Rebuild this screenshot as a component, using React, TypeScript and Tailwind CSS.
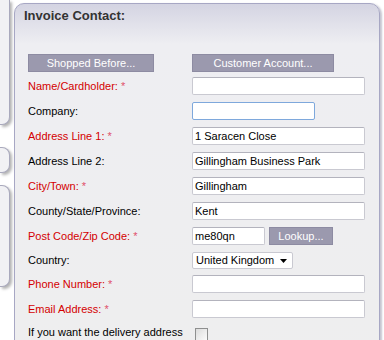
import React from 'react';

const Req = () => <span className="text-[#e0506a]"> *</span>;

const Label = ({ text, required }: { text: string; required?: boolean }) => (
  <div className={`w-[164px] shrink-0 text-[11px] leading-[13px] ${required ? 'text-[#d40000]' : 'text-black'}`}>
    {text}
    {required && <Req />}
  </div>
);

const TextBox = ({ value = '', width = 'w-[173px]', focused = false }: { value?: string; width?: string; focused?: boolean }) => (
  <div
    className={`${width} h-[18px] bg-white rounded-[2px] border flex items-center pl-[2px] text-[11px] text-black ${
      focused ? 'border-[#7ea8dc]' : 'border-[#c9c9d1] border-t-[#b3b3bd]'
    }`}
  >
    {value}
  </div>
);

const GreyButton = ({ label, width }: { label: string; width: string }) => (
  <button className={`${width} h-[18px] bg-[#9b99ae] border border-[#8d8ba2] text-white text-[11px] leading-none flex items-center justify-center`}>
    {label}
  </button>
);

const fields = [
  { label: 'Name/Cardholder:', required: true },
  { label: 'Company:', focused: true, width: 'w-[123px]' },
  { label: 'Address Line 1:', required: true, value: '1 Saracen Close' },
  { label: 'Address Line 2:', value: 'Gillingham Business Park' },
  { label: 'City/Town:', required: true, value: 'Gillingham' },
  { label: 'County/State/Province:', value: 'Kent' },
];

export default function App() {
  return (
    <div className="h-[340px] w-[384px] overflow-hidden bg-white font-['Liberation_Sans',Arial,sans-serif] flex">
      {/* left column remnants */}
      <div className="w-[10px] shrink-0 flex flex-col">
        <div className="h-[125px] bg-[#f1f1f4] border-r border-b border-[#a9a9bd] rounded-br-[8px] shadow-[2px_2px_3px_rgba(0,0,0,0.3)]" />
        <div className="mt-[22px] h-[26px] bg-[#f1f1f4] border border-l-0 border-[#a9a9bd] rounded-r-[8px] shadow-[2px_2px_3px_rgba(0,0,0,0.3)]" />
        <div className="mt-[12px] h-[102px] bg-[#f1f1f4] border border-l-0 border-[#a9a9bd] rounded-r-[8px] shadow-[2px_2px_3px_rgba(0,0,0,0.3)]" />
      </div>

      {/* main panel */}
      <div className="ml-[4px] mt-[3px] w-[366px] h-[400px] shrink-0 rounded-t-[10px] border border-[#a7a7c4] shadow-[2px_1px_2px_rgba(90,90,120,0.35)] bg-[linear-gradient(to_bottom,#d4d4e2_0px,#eeeef2_40px,#eeeeee_100%)]">
        <h2 className="pl-[9px] pt-[4px] h-[50px] text-[13px] font-bold text-[#333333] leading-[15px]">Invoice Contact:</h2>

        <div className="pl-[13px] flex flex-col">
          <div className="flex items-center">
            <div className="w-[164px] shrink-0">
              <GreyButton label="Shopped Before..." width="w-[126px]" />
            </div>
            <GreyButton label="Customer Account..." width="w-[142px]" />
          </div>

          <div className="mt-[5px] flex flex-col gap-[7px]">
            {fields.map((f) => (
              <div key={f.label} className="flex items-center h-[18px]">
                <Label text={f.label} required={f.required} />
                <TextBox value={f.value} width={f.width} focused={f.focused} />
              </div>
            ))}

            <div className="flex items-center h-[18px]">
              <Label text="Post Code/Zip Code:" required />
              <TextBox value="me80qn" width="w-[73px]" />
              <div className="ml-[4px]">
                <GreyButton label="Lookup..." width="w-[64px]" />
              </div>
            </div>

            <div className="flex items-center h-[17px] -mb-[1px]">
              <Label text="Country:" />
              <div className="w-[101px] h-[17px] bg-white border border-[#c9c9d1] rounded-[2px] flex items-center justify-between pl-[3px] pr-[5px] text-[11px] text-black">
                <span>United Kingdom</span>
                <svg width="7" height="4" viewBox="0 0 7 4">
                  <path d="M0 0 H7 L3.5 4 Z" fill="#000" />
                </svg>
              </div>
            </div>

            <div className="flex items-center h-[18px]">
              <Label text="Phone Number:" required />
              <TextBox />
            </div>

            <div className="flex items-center h-[18px]">
              <Label text="Email Address:" required />
              <TextBox />
            </div>

            <div className="flex items-start pt-[1px]">
              <Label text="If you want the delivery address" />
              <div className="ml-[3px] mt-[2px] w-[13px] h-[13px] border border-[#8e8f8f] bg-[linear-gradient(135deg,#dcdcdc,#fbfbfb)]" />
            </div>
          </div>
        </div>
      </div>
    </div>
  );
}
